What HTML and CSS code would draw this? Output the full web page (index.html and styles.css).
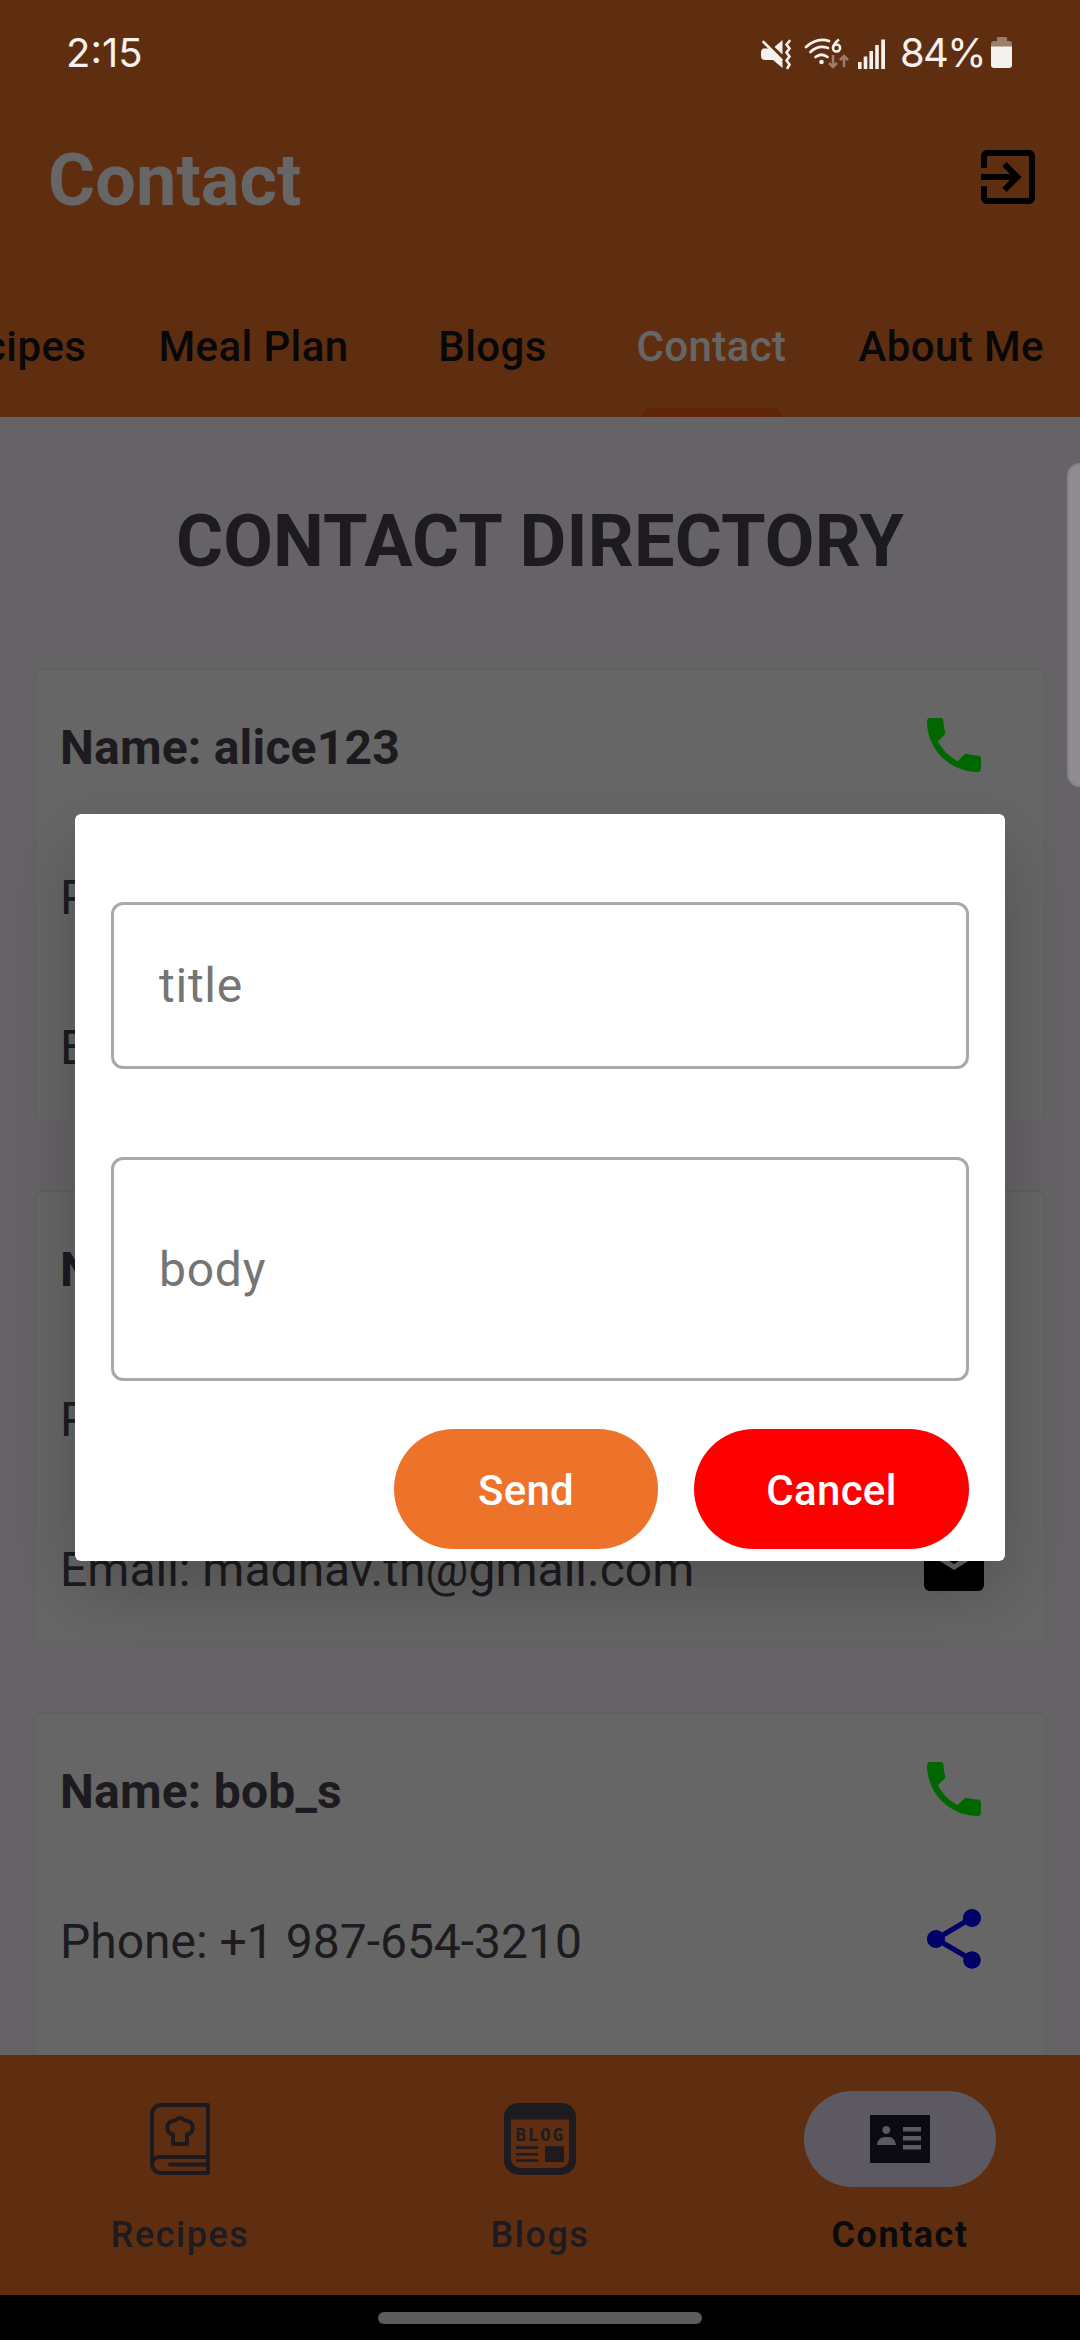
FILE: index.html
```html
<!DOCTYPE html>
<html lang="en">
<head>
<meta charset="utf-8">
<title>Contact</title>
<link rel="stylesheet" href="styles.css">
</head>
<body>
<svg class="sprite" width="0" height="0">
  <symbol id="phone" viewBox="0 0 24 24"><path d="M6.62 10.79c1.44 2.83 3.76 5.14 6.59 6.59l2.2-2.2c.27-.27.67-.36 1.02-.24 1.12.37 2.33.57 3.57.57.55 0 1 .45 1 1V20c0 .55-.45 1-1 1-9.39 0-17-7.61-17-17 0-.55.45-1 1-1h3.5c.55 0 1 .45 1 1 0 1.25.2 2.45.57 3.57.11.35.03.74-.25 1.02l-2.2 2.2z"/></symbol>
  <symbol id="share" viewBox="0 0 24 24"><path d="M18 16.08c-.76 0-1.44.3-1.96.77L8.91 12.7c.05-.23.09-.46.09-.7s-.04-.47-.09-.7l7.05-4.11c.54.5 1.25.81 2.04.81 1.66 0 3-1.34 3-3s-1.34-3-3-3-3 1.34-3 3c0 .24.04.47.09.7L8.04 9.81C7.5 9.31 6.79 9 6 9c-1.66 0-3 1.34-3 3s1.34 3 3 3c.79 0 1.5-.31 2.04-.81l7.12 4.16c-.05.21-.08.43-.08.65 0 1.61 1.31 2.92 2.92 2.92s2.92-1.31 2.92-2.92-1.31-2.92-2.92-2.92z"/></symbol>
  <symbol id="mail" viewBox="0 0 24 24"><path d="M20 4H4c-1.1 0-1.99.9-1.99 2L2 18c0 1.1.9 2 2 2h16c1.1 0 2-.9 2-2V6c0-1.1-.9-2-2-2zm0 4l-8 5-8-5V6l8 5 8-5v2z"/></symbol>
</svg>
<div class="app">
  <header class="top">
    <div class="titlebar">
      <h1>Contact</h1>
      <svg class="exit" viewBox="0 0 24 24"><path d="M10.09 15.59L11.5 17l5-5-5-5-1.41 1.41L12.67 11H3v2h9.67l-2.58 2.59zM19 3H5c-1.11 0-2 .9-2 2v4h2V5h14v14H5v-4H3v4c0 1.1.89 2 2 2h14c1.1 0 2-.9 2-2V5c0-1.1-.9-2-2-2z"/></svg>
    </div>
    <nav class="tabs">
      <span class="tab">Recipes</span>
      <span class="tab">Meal Plan</span>
      <span class="tab">Blogs</span>
      <span class="tab active">Contact</span>
      <span class="tab">About Me</span>
    </nav>
  </header>

  <main>
    <h2>CONTACT DIRECTORY</h2>
    <section class="card">
      <div class="row name"><span>Name: alice123</span><svg class="ic green"><use href="#phone"/></svg></div>
      <div class="row"><span>Phone:</span><svg class="ic blue"><use href="#share"/></svg></div>
      <div class="row"><span>Email:</span><svg class="ic"><use href="#mail"/></svg></div>
    </section>
    <section class="card">
      <div class="row name"><span>Name:</span><svg class="ic green"><use href="#phone"/></svg></div>
      <div class="row"><span>Phone:</span><svg class="ic blue"><use href="#share"/></svg></div>
      <div class="row"><span>Email: madhav.th@gmail.com</span><svg class="ic"><use href="#mail"/></svg></div>
    </section>
    <section class="card">
      <div class="row name"><span>Name: bob_s</span><svg class="ic green"><use href="#phone"/></svg></div>
      <div class="row"><span>Phone: +1 987-654-3210</span><svg class="ic blue"><use href="#share"/></svg></div>
      <div class="row"></div>
    </section>
  </main>

  <nav class="bottom">
    <div class="item">
      <div class="pill">
        <svg width="72" height="72" viewBox="0 0 72 72" fill="none" stroke="currentColor" stroke-width="4" stroke-linejoin="round" stroke-linecap="round">
          <path d="M64 2H17a9 9 0 0 0-9 9v50a9 9 0 0 0 9 9h47zM8 61a7.5 7.5 0 0 1 8-7h47M26 61.500h37"/>
          <path d="M29 41V31.500a7 7 0 0 1-1-13.500c2 0 3.500-.4 4.500-1.500a5 5 0 0 1 7 0c1 1.100 2.500 1.500 4.500 1.500a7 7 0 0 1-1 13.500V41z"/>
        </svg>
      </div>
      <span>Recipes</span>
    </div>
    <div class="item">
      <div class="pill">
        <svg width="72" height="72" viewBox="0 0 72 72" fill="currentColor">
          <path fill-rule="evenodd" d="M14 0h44a14 14 0 0 1 14 14v43a15 15 0 0 1-15 15H15A15 15 0 0 1 0 57V14A14 14 0 0 1 14 0zM7 16.500V56a9 9 0 0 0 9 9h40a9 9 0 0 0 9-9V16.500z"/>
          <path d="M12 43.300h22v2.600H12zM12 50h22v2.400H12zM12 56.300h22v2.500H12zM41 43.300h19V59H41z"/>
          <text class="blogtext" x="11.500" y="38">BLOG</text>
        </svg>
      </div>
      <span>Blogs</span>
    </div>
    <div class="item selected">
      <div class="pill">
        <svg width="60" height="48" viewBox="0 0 60 48" fill="currentColor">
          <path fill-rule="evenodd" d="M0 0h60v48H0zM16.300 11a4 4 0 1 0 .01 0zM7 30c.5-5 3.500-8 7.500-8h4c4 0 7 3 7.500 8zM33 12v4.600h18V12zM33 21v4.600h18V21zM33 30v4.600h18V30z"/>
        </svg>
      </div>
      <span>Contact</span>
    </div>
  </nav>
  <div class="gesture"><i></i></div>
</div>

<div class="scrim">
  <div class="dialog">
    <div class="field">title</div>
    <div class="field tall">body</div>
    <div class="actions">
      <button class="send">Send</button>
      <button class="cancel">Cancel</button>
    </div>
  </div>
</div>
<div class="edge"></div>
<div class="status">
  <span class="time">2:15</span>
  <svg class="sysicons" width="128" height="36" viewBox="0 0 128 36" fill="#f5f1ef">
    <path d="M3 13.500h6.500L22.500 27v6L13 25H5q-4 0-4-4v-3.500q0-3 2-4zM22.500 5v14.500L14.500 12z"/>
    <path d="M3.500 7L21.500 25" stroke="#f5f1ef" stroke-width="2.600" stroke-linecap="round"/>
    <path d="M29.500 6l-3 3.500 3 4-3 4 3 4-3 4 3 4-2 3.500" fill="none" stroke="#f5f1ef" stroke-width="2.600" stroke-linecap="round"/>
    <g fill="none" stroke="#f5f1ef" stroke-width="2.800" stroke-linecap="round"><path d="M46 12Q57 2 69 6M50.500 17Q58 9.500 68 13M55.500 22Q61.500 17.500 67.500 22"/></g>
    <circle cx="61.500" cy="27" r="2.300"/>
    <path d="M79 4.500q-5 4-6 8" fill="none" stroke="#f5f1ef" stroke-width="2.500"/><circle cx="76.500" cy="13" r="3.600" fill="none" stroke="#f5f1ef" stroke-width="2.500"/>
    <path d="M73 20v12m-4-4l4 4 4-4M84 32V21m-4 4l4-4 4 4" fill="none" stroke="#9c7d6d" stroke-width="2.600"/>
    <path d="M98 27h3.600v7H98zM103.700 21.500h3.600V34h-3.600zM109.400 16h3.600v18h-3.600zM115.200 10h3.600v24h-3.600zM121.200 4.500h3.800V34h-3.800z"/>
  </svg>
  <span class="pct">84%</span>
  <svg class="batt" width="22" height="32" viewBox="0 0 22 32"><path d="M6 1q0-1 1-1h8q1 0 1 1v3h2q3 0 3 3v3H0V7q0-3 3-3h3z" fill="#9c7d6d"/><path d="M0 9.500h21V28q0 3-3 3H3q-3 0-3-3z" fill="#f5f1ef"/></svg>
</div>
</body>
</html>
```
FILE: styles.css
```css
* { box-sizing: border-box; margin: 0; padding: 0; }
body { width: 1080px; height: 2340px; overflow: hidden; position: relative; font-family: Roboto, sans-serif; color: #49454f; background: #fef7ff; }
.sprite { display: block; position: absolute; }
.app { display: flex; flex-direction: column; width: 1080px; height: 2340px; }

.top { height: 417px; background: #ee732a; display: flex; flex-direction: column; padding-top: 93px; }
.titlebar { height: 180px; padding: 0 36px 12px 48px; display: flex; align-items: center; justify-content: space-between; }
h1 { font-size: 72px; font-weight: 700; line-height: 84px; color: #fff; padding-top: 8px; letter-spacing: .1px; }
.exit { width: 72px; height: 72px; fill: #000; }
.tabs { flex: 1; display: flex; justify-content: flex-end; overflow: hidden; }
.tab { flex: none; min-width: 216px; padding: 49px 36px 0; text-align: center; font-size: 42px; line-height: 50px; font-weight: 500; letter-spacing: .4px; color: #141414; white-space: nowrap; }
.tab.active { color: #fff; display: flex; flex-direction: column; justify-content: space-between; }
.tab.active::after { content: ""; height: 9px; margin: 0 5px; border-radius: 9px 9px 0 0; background: #ef5a14; }

main { height: 1638px; overflow: hidden; padding: 0 36px; display: flex; flex-direction: column; gap: 72px; }
h2 { flex: none; height: 181px; padding-top: 83px; text-align: center; font-size: 72px; line-height: 84px; font-weight: 700; letter-spacing: .2px; white-space: nowrap; }
.card { flex: none; background: #fff; border-radius: 6px; box-shadow: 0 -1px 2px rgba(0,0,0,.08); }
.row { height: 150px; padding: 0 54px 0 24px; display: flex; align-items: center; justify-content: space-between; font-size: 48px; white-space: nowrap; }
.row span { padding-top: 4px; }
.name { font-weight: 700; letter-spacing: .2px; }
.ic { width: 72px; height: 72px; fill: #000; }
.green { fill: #0f0; }
.blue { fill: #00f; }

.bottom { height: 240px; background: #ee732a; display: flex; }
.item { flex: 1; display: flex; flex-direction: column; align-items: center; padding-top: 36px; font-size: 36px; line-height: 48px; font-weight: 500; letter-spacing: 1.5px; }
.item > span { margin-top: 24px; }
.pill { width: 192px; height: 96px; border-radius: 48px; display: flex; align-items: center; justify-content: center; }
.selected { font-weight: 700; color: #1d1b20; }
.selected .pill { background: #e8def8; color: #1d192b; }
.blogtext { font: 700 17.5px "DejaVu Sans Mono", monospace; letter-spacing: 1.8px; }
.gesture { height: 45px; background: #000; display: flex; justify-content: center; padding-top: 17px; }
.gesture i { width: 324px; height: 12px; border-radius: 6px; background: #e6e6e6; }

.scrim { position: absolute; inset: 0; background: rgba(0,0,0,.6); padding: 814px 75px 0; }
.dialog { height: 747px; background: #fff; border-radius: 6px; padding: 88px 36px 0; box-shadow: 0 30px 70px rgba(0,0,0,.2); }
.field { height: 167px; border: 3px solid #a9a9a9; border-radius: 12px; padding-left: 45px; display: flex; align-items: center; font-size: 48px; letter-spacing: .75px; color: #757575; }
.tall { height: 224px; margin-top: 88px; }
.actions { display: flex; justify-content: flex-end; gap: 36px; margin-top: 48px; }
button { border: 0; height: 120px; border-radius: 60px; padding-top: 3px; color: #fff; font: 500 42px Roboto, sans-serif; letter-spacing: .3px; }
.send { width: 264px; background: #ee732a; }
.cancel { width: 275px; background: #f00; }

.edge { position: absolute; left: 1067px; top: 463px; width: 26px; height: 324px; border-radius: 13px; background: #8e8c8f; border: 2px solid #858386; }
.status { position: absolute; left: 0; top: 0; width: 1080px; height: 105px; padding: 0 67px 0 66px; display: flex; align-items: center; color: #f5f1ef; font-family: Inter, sans-serif; font-size: 40px; }
.time { letter-spacing: 0; margin-right: auto; }
.pct { letter-spacing: -1.6px; margin-left: 12px; }
.batt { margin-left: 6px; }
```
